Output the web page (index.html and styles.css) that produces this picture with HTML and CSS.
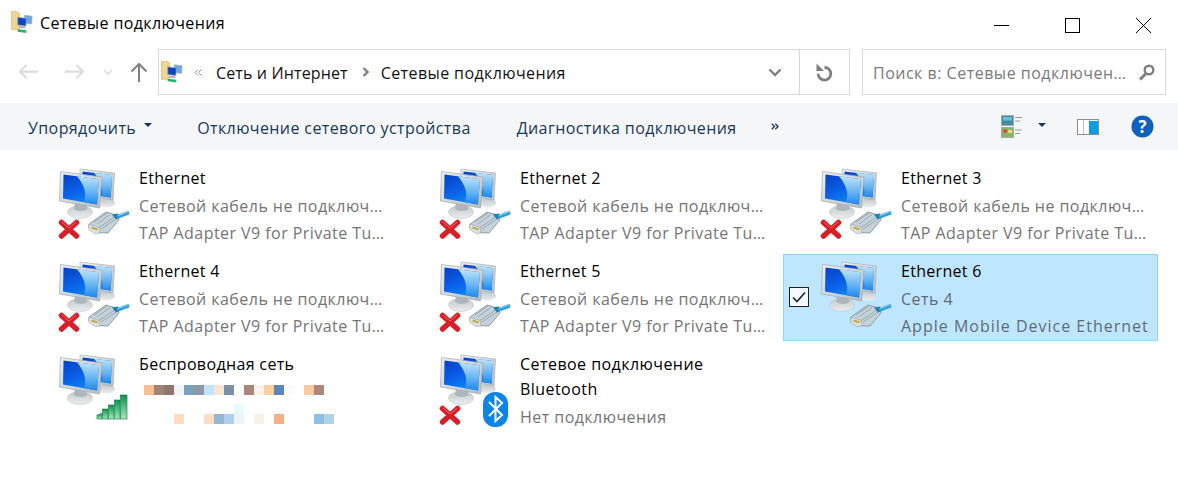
FILE: index.html
```html
<!DOCTYPE html>
<html lang="ru">
<head>
<meta charset="utf-8">
<title>Сетевые подключения</title>
<link rel="stylesheet" href="styles.css">
</head>
<body>
<svg class="defs" width="0" height="0" aria-hidden="true">
  <defs>
    <linearGradient id="scr" x1="0" y1="0" x2="0.5" y2="1">
      <stop offset="0" stop-color="#0640c4"/><stop offset="0.6" stop-color="#0a62ea"/><stop offset="1" stop-color="#0c86f2"/>
    </linearGradient>
    <linearGradient id="refl" x1="0" y1="0" x2="0" y2="1">
      <stop offset="0" stop-color="#bfe4fb"/><stop offset="0.6" stop-color="#5fb0f2"/><stop offset="1" stop-color="#1f86ee"/>
    </linearGradient>
    <linearGradient id="frame" x1="0" y1="0" x2="1" y2="1">
      <stop offset="0" stop-color="#eef1f3"/><stop offset="1" stop-color="#b4bcc2"/>
    </linearGradient>
    <linearGradient id="base" x1="0" y1="0" x2="0" y2="1">
      <stop offset="0" stop-color="#c2c8cc"/><stop offset="1" stop-color="#eceeef"/>
    </linearGradient>
    <linearGradient id="bar" x1="0" y1="0" x2="0" y2="1">
      <stop offset="0" stop-color="#0c9450"/><stop offset="1" stop-color="#a5e5bf"/>
    </linearGradient>
    <symbol id="pc" viewBox="0 0 80 87">
      <ellipse cx="56" cy="42" rx="9" ry="4.500" fill="url(#base)"/>
      <path d="M30 8l34.500 4L63 39l-16-2.500-17-3z" fill="url(#frame)" stroke="#a8b1b6" stroke-width=".7"/>
      <path d="M32.500 10.500l29.500 3.400-1.300 22.600-14-2-14-2.500z" fill="url(#scr)"/>
      <path d="M44 11.800l18 2.100-1.300 22.600-8.500-1.200c1-8-2-16-8.200-23.500z" fill="url(#refl)"/>
      <ellipse cx="30" cy="51" rx="12.500" ry="6.500" fill="url(#base)" stroke="#b9bfc3" stroke-width=".5"/>
      <path d="M25 41h11l1.500 7c-3 2.500-10 2.500-13.500 0z" fill="#aeb6bb"/>
      <path d="M10.500 10.500L52 16l-2.500 31L9.500 40z" fill="url(#frame)" stroke="#9fa9af" stroke-width=".7"/>
      <path d="M13.500 13.500l35.500 4.700-2 25.300-34-6z" fill="url(#scr)"/>
      <path d="M27 15.300l22 2.900-2 25.300-13-2.300c3-8 .5-17-7-25.900z" fill="url(#refl)"/>
    </symbol>
    <symbol id="x" viewBox="0 0 80 87">
      <path d="M11.500 61.500L26.500 75M26.500 61.500L11.500 75" fill="none" stroke="#d81f28" stroke-width="5.500" stroke-linecap="round"/>
      <path d="M12 61L19 67l7-6" fill="none" stroke="#f0636a" stroke-width="1" stroke-linecap="round"/>
    </symbol>
    <symbol id="plug" viewBox="0 0 80 87">
      <path d="M39 63l17-12 12 3.500 1 4.500-11 13-13-.5-6-4z" fill="#c6d2d9" stroke="#7f8c95" stroke-width=".8"/>
      <path d="M39 63l10 3.500 1 5.500-5 .5-6-4z" fill="#dbe3e7" stroke="#8a969e" stroke-width=".5"/>
      <path d="M41.500 66.500l6 2" stroke="#c7a93e" stroke-width="2"/>
      <path d="M49 66.500l17-11.500M51 68l15-10M47 63l13-9.500M44 61l13-9" stroke="#8f9ca5" stroke-width=".8" fill="none"/>
      <path d="M62 53.500l6-1 2 4-4 2z" fill="#1f7fa8"/>
      <path d="M67 56l12-4.500" stroke="#2f9fdc" stroke-width="4" fill="none"/>
      <path d="M68 54.500l10-3.800" stroke="#9fd8f4" stroke-width="1" fill="none"/>
    </symbol>
    <symbol id="wifi" viewBox="0 0 80 87">
      <g fill="url(#bar)" stroke="#0a7a40" stroke-width=".6">
        <path d="M47 72v-4l5-1.500V72z"/>
        <rect x="52.500" y="62" width="5.500" height="10"/>
        <rect x="58.500" y="58" width="5.500" height="14"/>
        <rect x="64.500" y="53" width="5.500" height="19"/>
        <rect x="70.500" y="48" width="6.500" height="24"/>
      </g>
    </symbol>
    <symbol id="bt" viewBox="0 0 80 87">
      <rect x="52" y="45" width="25" height="35" rx="12" fill="#0a84e8"/>
      <path d="M58 55l13 13-6.500 6V50L71 56 58 69" fill="none" stroke="#fff" stroke-width="2"/>
    </symbol>
    <symbol id="netfolder" viewBox="0 0 24 24">
      <path d="M.5 0H6l3 2v17H.5z" fill="#f0d490" stroke="#cbb069" stroke-width=".6"/>
      <path d="M14 4l8 1-.5 8-7-1z" fill="#6ea6e4" stroke="#a5afb5" stroke-width=".8"/>
      <path d="M7 6l9 1.200-.5 8L7 14z" fill="#0a44c8" stroke="#9aa5ab" stroke-width=".8"/>
      <path d="M9 15.500h5l2 2H8z" fill="#aab2b6"/>
      <path d="M7 18.500l9 1v3l-9-1.500z" fill="#1fb865"/>
    </symbol>
  </defs>
</svg>

<div class="window">
  <header class="titlebar">
    <svg class="ico-title"><use href="#netfolder"/></svg>
    <span class="title">Сетевые подключения</span>
    <div class="winctl">
      <svg class="ctl" viewBox="0 0 15 15"><path d="M0 7.500h15" stroke="#000" fill="none"/></svg>
      <svg class="ctl" viewBox="0 0 15 15"><rect x=".5" y=".5" width="14" height="14" stroke="#000" fill="none"/></svg>
      <svg class="ctl" viewBox="0 0 15 15"><path d="M0 0l15 15M15 0L0 15" stroke="#000" stroke-width="1" fill="none"/></svg>
    </div>
  </header>

  <nav class="nav">
    <svg class="nb back" viewBox="0 0 20 16"><path d="M1 8h19M8 1L1 8l7 7" fill="none" stroke="#dcdcdc" stroke-width="2.200"/></svg>
    <svg class="nb fwd" viewBox="0 0 20 16"><path d="M0 8h19M12 1l7 7-7 7" fill="none" stroke="#dcdcdc" stroke-width="2.200"/></svg>
    <svg class="nb drop" viewBox="0 0 10 6"><path d="M1 1l4 4 4-4" fill="none" stroke="#dcdcdc" stroke-width="1.500"/></svg>
    <svg class="nb up" viewBox="0 0 18 20"><path d="M9 20V2M1.500 9.500L9 2l7.500 7.500" fill="none" stroke="#808080" stroke-width="2"/></svg>
    <div class="address">
      <svg class="ico-addr"><use href="#netfolder"/></svg>
      <svg class="dbl" viewBox="0 0 8 7"><path d="M4 .5L1 3.500l3 3M7.500 .5l-3 3 3 3" fill="none" stroke="#8a8a8a"/></svg>
      <span class="crumb c-a">Сеть и Интернет</span>
      <svg class="sep" viewBox="0 0 7 10"><path d="M1.500 1l4 4-4 4" fill="none" stroke="#808080" stroke-width="2.400"/></svg>
      <span class="crumb c-b">Сетевые подключения</span>
      <svg class="chev" viewBox="0 0 14 9"><path d="M1.500 1.500L7 7l5.500-5.500" fill="none" stroke="#808080" stroke-width="2.400"/></svg>
      <div class="refresh">
        <svg viewBox="0 0 17 19"><path d="M8.500 4.500a6.300 6.300 0 1 1-6.300 6.300" fill="none" stroke="#808080" stroke-width="2.800"/><path d="M.5 .5V8H8z" fill="#808080"/></svg>
      </div>
    </div>
    <div class="search">
      <span class="placeholder">Поиск в: Сетевые подключен…</span>
      <svg class="mag" viewBox="0 0 17 17"><circle cx="11" cy="6" r="4.300" fill="none" stroke="#808080" stroke-width="2.400"/><path d="M8 9.500L2 15.500" stroke="#808080" stroke-width="3"/></svg>
    </div>
  </nav>

  <div class="toolbar">
    <span class="tool t1">Упорядочить</span>
    <span class="caret c1"></span>
    <span class="tool t2">Отключение сетевого устройства</span>
    <span class="tool t3">Диагностика подключения</span>
    <svg class="more" viewBox="0 0 8 7"><path d="M.8 .8l2.700 2.700L.8 6.200M4.300 .8L7 3.500 4.300 6.200" fill="none" stroke="#16375c" stroke-width="1.300"/></svg>
    <svg class="views" viewBox="0 0 22 23">
      <rect x=".5" y=".5" width="12" height="10" fill="#3d8f9e" stroke="#a8a8a8"/>
      <rect x="2" y="2" width="9" height="3.500" fill="#6fb9e6"/>
      <path d="M14 2.500h7M14 6h5M14 15h7M14 18.500h5" stroke="#9a9a9a"/>
      <rect x=".5" y="12.500" width="12" height="10" fill="#86b86a" stroke="#a8a8a8"/>
      <circle cx="4" cy="16" r="2" fill="#e2483a"/>
      <rect x="7" y="15" width="4" height="3" fill="#f0d878"/>
    </svg>
    <span class="caret c2"></span>
    <svg class="pane" viewBox="0 0 22 16">
      <rect x=".5" y=".5" width="21" height="15" fill="#fff" stroke="#8e8e8e"/>
      <path d="M6.500 1v14" stroke="#bdbdbd"/>
      <rect x="12" y="2" width="9" height="13" fill="#0b9de6"/>
    </svg>
    <svg class="help" viewBox="0 0 23 23">
      <circle cx="11.500" cy="11.500" r="11" fill="#0d62bd"/>
      <text x="11.500" y="17.500" class="helpq">?</text>
    </svg>
  </div>

  <main class="grid">
    <div class="item">
      <svg class="ico"><use href="#pc"/><use href="#x"/><use href="#plug"/></svg>
      <div class="info"><div class="name">Ethernet</div><div class="sub">Сетевой кабель не подключ…</div><div class="sub">TAP Adapter V9 for Private Tu…</div></div>
    </div>
    <div class="item">
      <svg class="ico"><use href="#pc"/><use href="#x"/><use href="#plug"/></svg>
      <div class="info"><div class="name">Ethernet 2</div><div class="sub">Сетевой кабель не подключ…</div><div class="sub">TAP Adapter V9 for Private Tu…</div></div>
    </div>
    <div class="item">
      <svg class="ico"><use href="#pc"/><use href="#x"/><use href="#plug"/></svg>
      <div class="info"><div class="name">Ethernet 3</div><div class="sub">Сетевой кабель не подключ…</div><div class="sub">TAP Adapter V9 for Private Tu…</div></div>
    </div>
    <div class="item">
      <svg class="ico"><use href="#pc"/><use href="#x"/><use href="#plug"/></svg>
      <div class="info"><div class="name">Ethernet 4</div><div class="sub">Сетевой кабель не подключ…</div><div class="sub">TAP Adapter V9 for Private Tu…</div></div>
    </div>
    <div class="item">
      <svg class="ico"><use href="#pc"/><use href="#x"/><use href="#plug"/></svg>
      <div class="info"><div class="name">Ethernet 5</div><div class="sub">Сетевой кабель не подключ…</div><div class="sub">TAP Adapter V9 for Private Tu…</div></div>
    </div>
    <div class="item selected">
      <span class="check"><svg viewBox="0 0 14 12"><path d="M1 6.500L5 10.500 13 1.500" fill="none" stroke="#222" stroke-width="1.600"/></svg></span>
      <svg class="ico"><use href="#pc"/><use href="#plug"/></svg>
      <div class="info"><div class="name">Ethernet 6</div><div class="sub">Сеть 4</div><div class="sub wide">Apple Mobile Device Ethernet</div></div>
    </div>
    <div class="item">
      <svg class="ico"><use href="#pc"/><use href="#wifi"/></svg>
      <div class="info">
        <div class="name tight">Беспроводная сеть</div>
        <div class="blur b1">
          <i style="background:#fdbf92"></i><i style="background:#a08479"></i><i style="background:#8f776e"></i><i style="background:#f3f4f6"></i><i style="background:#78a3bd"></i><i style="background:#8e99a8"></i><i style="background:#c0e4fd"></i><i style="background:#fde4d2"></i><i style="background:#7b90a6"></i><i></i><i style="background:#a98679"></i><i style="background:#fdf2ec"></i><i style="background:#fdcf9f"></i><i style="background:#5f85b8"></i><i style="background:#f9fbfc"></i><i></i><i style="background:#fcc9a2"></i><i style="background:#ab8879"></i>
        </div>
        <div class="blur bm">
          <i></i><i></i><i></i><i></i><i></i><i></i><i></i><i></i><i></i><i style="background:#e6fbfe"></i>
        </div>
        <div class="blur">
          <i></i><i></i><i style="background:#fafdfe"></i><i style="background:#fedcc0"></i><i></i><i></i><i style="background:#fddcc2"></i><i style="background:#95b6d4"></i><i style="background:#aed0ee"></i><i style="background:#ecf5f3"></i><i></i><i style="background:#f6f2ea"></i><i></i><i style="background:#f5b183"></i><i></i><i></i><i></i><i style="background:#8ec0e4"></i><i style="background:#b0d4e6"></i>
        </div>
      </div>
    </div>
    <div class="item">
      <svg class="ico"><use href="#pc"/><use href="#x"/><use href="#bt"/></svg>
      <div class="info"><div class="name wrap">Сетевое подключение<br>Bluetooth</div><div class="sub">Нет подключения</div></div>
    </div>
  </main>
</div>
</body>
</html>
```

FILE: styles.css
```css
* { box-sizing: border-box; }
html, body { margin: 0; padding: 0; background: #fff; overflow: hidden; }
body { font-family: "Open Sans", "Noto Sans", "Liberation Sans", sans-serif; font-size: 16px; color: #000; }
.defs { position: absolute; }
svg { display: block; flex: none; }

.window { width: 1178px; height: 492px; display: flex; flex-direction: column; }

.titlebar { height: 49px; display: flex; align-items: center; padding-left: 11px; padding-bottom: 3px; }
.ico-title { width: 23px; height: 24px; margin-right: 6px; }
.title { font-size: 16px; letter-spacing: .4px; }
.winctl { margin-left: auto; display: flex; gap: 54px; padding-right: 27px; margin-top: 4px; }
.winctl .ctl { width: 15px; height: 15px; margin-left: 2px; }

.nav { height: 46px; display: flex; align-items: center; padding-left: 19px; }
.nb { height: auto; }
.back { width: 19px; }
.fwd { width: 19px; margin-left: 27px; }
.drop { width: 10px; margin-left: 19px; }
.up { width: 18px; margin-left: 17px; }

.address { width: 692px; height: 46px; margin-left: 10px; border: 1px solid #d9d9d9; display: flex; align-items: center; padding-left: 2px; }
.ico-addr { width: 23px; height: 23px; }
.dbl { width: 8px; height: 7px; margin-left: 10px; margin-right: 14px; }
.crumb { font-size: 16px; color: #111; white-space: nowrap; padding-top: 1px; }
.c-a { letter-spacing: .13px; }
.c-b { letter-spacing: .4px; }
.sep { width: 7px; height: 10px; margin: 0 12px 0 14px; }
.chev { width: 14px; height: 9px; margin-left: auto; }
.refresh { width: 50px; height: 44px; margin-left: 17px; border-left: 1px solid #d9d9d9; display: flex; align-items: center; justify-content: center; }
.refresh svg { width: 17px; height: 19px; }

.search { width: 304px; height: 46px; margin-left: 12px; border: 1px solid #d9d9d9; display: flex; align-items: center; padding: 0 10px; justify-content: space-between; }
.placeholder { font-size: 16px; color: #7a7a7a; white-space: nowrap; letter-spacing: .5px; padding-top: 1px; }
.mag { width: 17px; height: 17px; }

.toolbar { height: 47px; margin-top: 8px; background: #f5f6f7; display: flex; align-items: center; padding-left: 28px; color: #17375e; }
.tool { font-size: 16px; white-space: nowrap; letter-spacing: .4px; padding-top: 2px; }
.caret { width: 0; height: 0; border-left: 4px solid transparent; border-right: 4px solid transparent; border-top: 4px solid #17375e; margin-bottom: 3px; }
.c1 { margin-left: 8px; margin-right: 45px; }
.t3 { margin-left: 46px; }
.more { width: 8px; height: 7px; margin-left: 34px; }
.views { width: 22px; height: 23px; margin-left: 222px; }
.c2 { margin-left: 15px; }
.pane { width: 22px; height: 16px; margin-left: 31px; }
.help { width: 23px; height: 23px; margin-left: 32px; }
.helpq { font: bold 17px "Open Sans", sans-serif; fill: #fff; text-anchor: middle; }

.grid { display: grid; grid-template-columns: repeat(3, 375px); grid-auto-rows: 87px; column-gap: 6px; row-gap: 6px; padding: 11px 0 0 21px; }
.item { display: flex; padding-left: 29px; position: relative; }
.ico { width: 80px; height: 87px; margin-right: 9px; }
.info { padding-top: 5px; font-size: 16px; white-space: nowrap; }
.name { line-height: 25px; color: #000; margin-bottom: 2px; letter-spacing: .3px; }
.tight { letter-spacing: .35px; }
.wrap { letter-spacing: .45px; }
.sub { line-height: 26.500px; color: #757575; letter-spacing: .45px; }
.wide { letter-spacing: 1px; }

.selected { background: #bfe6ff; outline: 1px solid #8fd2fb; outline-offset: -1px; }
.selected .sub { color: #5e6c76; }
.check { position: absolute; left: 6px; top: 33px; width: 20px; height: 20px; border: 1px solid #222; background: #f4fbff; display: flex; align-items: center; justify-content: center; }
.check svg { width: 14px; height: 12px; }

.blur { display: flex; height: 10px; padding-left: 5px; }
.blur i { width: 10px; height: 10px; display: block; }
.b1 { margin-top: 8px; }
.bm { margin-top: 9px; }
```
